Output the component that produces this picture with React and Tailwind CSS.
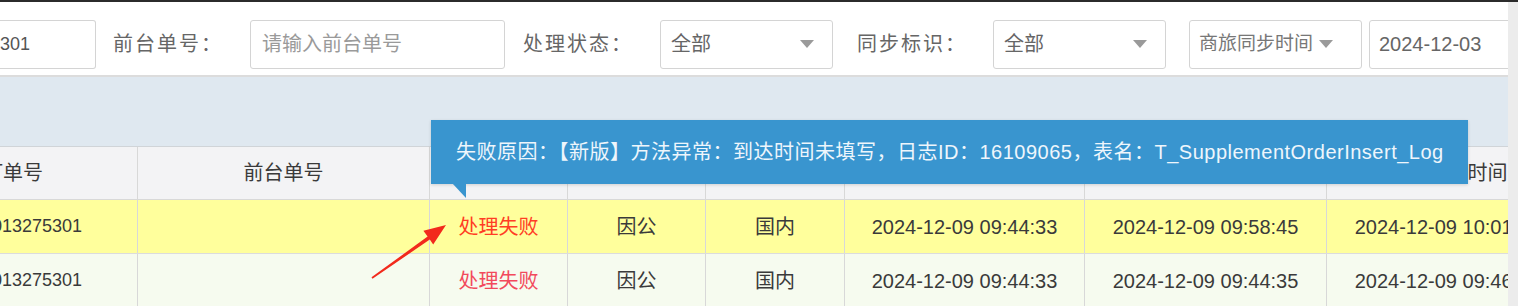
import React from 'react';

const cjk = { fontFamily: '"Liberation Sans", "Noto Sans CJK SC", sans-serif' };

const Caret = () => (
  <span className="w-0 h-0 border-l-[7px] border-r-[7px] border-t-[8px] border-l-transparent border-r-transparent border-t-[#9a9a9a]" />
);

const Label = ({ children, className = '' }) => (
  <div className={`text-[20px] tracking-[2px] text-[#666] whitespace-nowrap ${className}`}>{children}</div>
);

const Select = ({ value, className = '' }) => (
  <div className={`h-[49px] border border-[#d4d4d4] rounded-[3px] bg-white flex items-center justify-between pl-[10px] pr-[18px] ${className}`}>
    <span className="text-[20px] text-[#666]">{value}</span>
    <Caret />
  </div>
);

const columns = [
  { w: 'w-[138px]', head: '订单号', clip: true },
  { w: 'w-[292px]', head: '前台单号' },
  { w: 'w-[138px]', head: '处理状态' },
  { w: 'w-[138px]', head: '因公因私' },
  { w: 'w-[139px]', head: '国内国际' },
  { w: 'w-[240px]', head: '创建时间' },
  { w: 'w-[242px]', head: '更新时间' },
  { w: 'w-[242px]', head: '商旅同步时间' },
];

const rows = [
  {
    bg: 'bg-[#ffff9c]',
    red: 'text-[#ff3d24]',
    cells: ['013275301', '', '处理失败', '因公', '国内', '2024-12-09 09:44:33', '2024-12-09 09:58:45', '2024-12-09 10:01:12'],
  },
  {
    bg: 'bg-[#f6fbef]',
    red: 'text-[#f24a5c]',
    cells: ['013275301', '', '处理失败', '因公', '国内', '2024-12-09 09:44:33', '2024-12-09 09:44:35', '2024-12-09 09:46:20'],
  },
];

const Cell = ({ col, children, className = '' }) => (
  <div className={`${col.w} shrink-0 border-r border-[#d8d8d8] flex items-center overflow-hidden ${col.clip ? 'justify-start' : 'justify-center'} ${className}`}>
    {children}
  </div>
);

export default function App() {
  return (
    <div className="relative w-[1518px] h-[306px] overflow-hidden bg-white flex flex-col" style={cjk}>
      <div className="h-[2px] bg-[#2b2b2b] shrink-0" />
      <div className="flex flex-1 min-h-0">
        <div className="w-[1508px] shrink-0 overflow-hidden flex flex-col">
          {/* filter bar */}
          <div className="h-[75px] shrink-0 flex items-center pt-[11px] border-b-2 border-[#dcdcdc]">
            <div className="w-[96px] h-[49px] shrink-0 border border-l-0 border-[#d4d4d4] rounded-r-[3px] flex items-center text-[18px] text-[#555]">
              301
            </div>
            <Label className="ml-[17px]">前台单号：</Label>
            <div className="ml-[27px] w-[255px] h-[49px] shrink-0 border border-[#d4d4d4] rounded-[3px] flex items-center pl-[11px] text-[20px] text-[#9a9a9a]">
              请输入前台单号
            </div>
            <Label className="ml-[18px]">处理状态：</Label>
            <Select value="全部" className="ml-[27px] w-[173px] shrink-0" />
            <Label className="ml-[24px]">同步标识：</Label>
            <Select value="全部" className="ml-[26px] w-[173px] shrink-0" />
            <div className="ml-[23px] w-[173px] h-[49px] shrink-0 border border-[#d4d4d4] rounded-[3px] flex items-center pl-[9px] gap-[6px]">
              <span className="text-[19px] text-[#777]">商旅同步时间</span>
              <Caret />
            </div>
            <div className="ml-[7px] w-[160px] h-[49px] shrink-0 border border-[#d4d4d4] rounded-[3px] flex items-center pl-[9px] text-[20px] text-[#666]">
              2024-12-03
            </div>
          </div>

          {/* toolbar band */}
          <div className="h-[70px] shrink-0 bg-[#dfe8f0] border-b border-[#d0d4d8]" />

          {/* table header */}
          <div className="h-[53px] shrink-0 flex bg-[#f3f3f5] border-b border-[#d8d8d8]">
            {columns.map((c, i) => (
              <Cell key={i} col={c}>
                <span className={`text-[20px] text-[#3a3a3a] whitespace-nowrap ${c.clip ? '-ml-[17px]' : ''}`}>{c.head}</span>
              </Cell>
            ))}
          </div>

          {/* rows */}
          {rows.map((r, ri) => (
            <div key={ri} className={`h-[54px] shrink-0 flex ${r.bg} border-b border-[#dcdcdc]`}>
              {columns.map((c, i) => (
                <Cell key={i} col={c}>
                  <span
                    className={`whitespace-nowrap ${i === 0 ? '-ml-[8px] text-[18px] text-[#3a3a3a]' : ''} ${i === 2 ? `text-[20px] ${r.red}` : ''} ${i === 3 || i === 4 ? 'text-[20px] text-[#3a3a3a]' : ''} ${i >= 5 ? 'text-[20px] text-[#3a3a3a]' : ''}`}
                  >
                    {r.cells[i]}
                  </span>
                </Cell>
              ))}
            </div>
          ))}
        </div>
        <div className="flex-1 bg-[#ececec]" />
      </div>

      {/* tooltip */}
      <div className="absolute left-[431px] top-[120px] w-[1037px] h-[64px] bg-[#3995cf] flex items-center pl-[25px] text-[20px] tracking-[0.5px] text-[#eef6fc] whitespace-nowrap shadow-[0_1px_3px_rgba(0,0,0,0.15)]">
        失败原因：【新版】方法异常：到达时间未填写，日志ID：16109065，表名：T_SupplementOrderInsert_Log
      </div>

      {/* tooltip tail + red arrow */}
      <svg className="absolute inset-0 pointer-events-none" width="1518" height="306" viewBox="0 0 1518 306">
        <polygon points="452,183 466,183 466,198" fill="#3995cf" />
        <polygon
          points="371.5,277.3 427.6,236.6 423.4,230.8 446,225 433.2,244.4 429.8,239.6 372.5,278.7"
          fill="#f22a1c"
        />
      </svg>
    </div>
  );
}
